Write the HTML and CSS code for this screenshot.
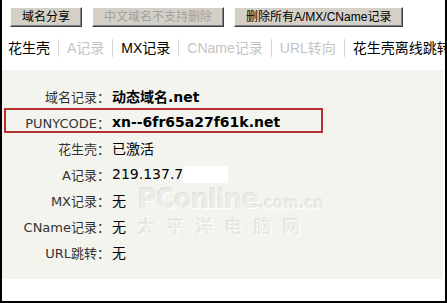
FILE: index.html
```html
<!DOCTYPE html>
<html>
<head>
	<meta name="viewport" content="width=device-width, initial-scale=1.0">
	<link rel="stylesheet" href="styles.css">
</head>
<body>
    <div class="frame">
        <div class="toolbar">
            <button class="btn">域名分享</button>
            <button class="btn off">中文域名不支持删除</button>
            <button class="btn">删除所有A/MX/CName记录</button>
        </div>

        <div class="tabs">
            <span class="tab">花生壳</span>
            <span class="tab off">A记录</span>
            <span class="tab">MX记录</span>
            <span class="tab off">CName记录</span>
            <span class="tab off">URL转向</span>
            <span class="tab">花生壳离线跳转</span>
        </div>

        <div class="panel">
            <div class="row">
                <div class="label">域名记录：</div>
                <div class="value bold">动态域名.net</div>
            </div>
            <div class="row mark">
                <div class="label">PUNYCODE：</div>
                <div class="value bold">xn--6fr65a27f61k.net</div>
            </div>
            <div class="row">
                <div class="label">花生壳：</div>
                <div class="value">已激活</div>
            </div>
            <div class="row">
                <div class="label">A记录：</div>
                <div class="value">219.137.7<span class="mask"></span></div>
            </div>
            <div class="row">
                <div class="label">MX记录：</div>
                <div class="value">无</div>
            </div>
            <div class="row">
                <div class="label">CName记录：</div>
                <div class="value">无</div>
            </div>
            <div class="row">
                <div class="label">URL跳转：</div>
                <div class="value">无</div>
            </div>

            <!-- watermark from the source picture -->
            <div class="wm">
                <div class="wm-top">PConline<small>.com.cn</small></div>
                <div class="wm-cn">太平洋电脑网</div>
            </div>
        </div>
    </div>
</body>
</html>
```

FILE: styles.css
```css
body{
    margin: 0;
    padding: 0;
    background: #fff;
}

.frame{
    width: 447px;
    height: 303px;
    box-sizing: border-box;
    border: 2px solid #000;
    border-top: none;
    background: #fff;
    overflow: hidden;
}

.toolbar{
    display: flex;
    gap: 10px;
    padding: 7px 0 0 8px;
}

.btn{
    height: 20px;
    padding: 0 11px;
    margin: 0;
    font-family: "Liberation Sans", "Noto Sans CJK SC", sans-serif;
    font-size: 12px;
    line-height: 18px;
    color: #000;
    background: #d4d0c8;
    border: 1px solid;
    border-color: #fff #404040 #404040 #fff;
    box-shadow: inset -1px -1px 0 #808080;
    border-radius: 0;
}

.btn.off{
    color: #a0a0a0;
}

.tabs{
    display: flex;
    margin-top: 12px;
    padding-left: 6px;
    white-space: nowrap;
    overflow: hidden;
}

.tab{
    padding: 0 8px 0 8px;
    border-left: 1px solid #d8d8d8;
    font-family: "Liberation Sans", "Noto Sans CJK SC", sans-serif;
    font-size: 14px;
    line-height: 18px;
    height: 18px;
    color: #000;
}

.tab:first-child{
    border-left: none;
    padding-left: 0;
}

.tab.off{
    color: #c4c4c4;
}

.panel{
    position: relative;
    margin: 13px 2px 0 0;
    height: 196px;
    padding-top: 13px;
    background: #f4f4ef;
}

.row{
    position: relative;
    display: flex;
    align-items: center;
    height: 26px;
}

.label{
    width: 108px;
    text-align: right;
    font-family: "DejaVu Sans", "Noto Sans CJK SC", sans-serif;
    font-size: 13px;
    color: #333;
}

.value{
    display: flex;
    align-items: center;
    padding-left: 2px;
    font-family: "DejaVu Sans", "Noto Sans CJK SC", sans-serif;
    font-size: 14px;
    color: #000;
}

.bold{
    font-weight: bold;
}

.mark::after{
    content: "";
    position: absolute;
    left: 2px;
    top: -1px;
    width: 319px;
    height: 25px;
    box-sizing: border-box;
    border: 2px solid #b5302f;
}

.mask{
    display: inline-block;
    width: 45px;
    height: 17px;
    background: #fff;
}

.wm{
    position: absolute;
    left: 136px;
    top: 116px;
    color: #ebebe7;
    text-shadow: 1px 1px 0 #fff, -1px -1px 0 #dfdfda;
    font-family: "DejaVu Sans", "Noto Sans CJK SC", sans-serif;
    font-weight: bold;
    white-space: nowrap;
}

.wm-top{
    font-size: 26px;
    line-height: 26px;
    letter-spacing: -1px;
}

.wm-top small{
    font-size: 15px;
    letter-spacing: 0;
}

.wm-cn{
    font-size: 17px;
    line-height: 22px;
    letter-spacing: 12px;
    font-weight: normal;
}
```
